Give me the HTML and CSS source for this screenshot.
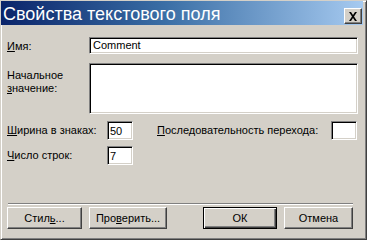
FILE: index.html
```html
<!DOCTYPE html>
<html lang="ru">
<head>
<meta charset="utf-8">
<title>Свойства текстового поля</title>
<link rel="stylesheet" href="styles.css">
</head>
<body>
<div class="window">
  <div class="titlebar">
    <span class="title">Свойства текстового поля</span>
    <span class="close">
      <svg width="10" height="9" viewBox="0 0 10 9"><path d="M1 0h2l2 3 2-3h2L6 4.5 9 9H7L5 6 3 9H1l3-4.5z" fill="#000"/></svg>
    </span>
  </div>
  <div class="content">
    <div class="row row-name">
      <label class="lbl"><u>И</u>мя:</label>
      <div class="field field-wide"><span class="val">Comment</span></div>
    </div>
    <div class="row row-area">
      <label class="lbl">Начальное<br><u>з</u>начение:</label>
      <div class="field field-wide field-area"></div>
    </div>
    <div class="row row-small">
      <label class="lbl lbl-short"><u>Ш</u>ирина в знаках:</label>
      <div class="field field-small"><span class="val">50</span></div>
      <label class="lbl lbl-tab"><u>П</u>оследовательность перехода:</label>
      <div class="field field-small"></div>
    </div>
    <div class="row row-small row-lines">
      <label class="lbl lbl-short"><u>Ч</u>исло строк:</label>
      <div class="field field-small"><span class="val">7</span></div>
    </div>
    <div class="spacer"></div>
    <div class="sep"></div>
    <div class="buttons">
      <button class="btn btn-style">Стил<u>ь</u>...</button>
      <button class="btn btn-check">Про<u>в</u>ерить...</button>
      <button class="btn btn-default">ОК</button>
      <button class="btn btn-cancel">Отмена</button>
    </div>
  </div>
</div>
</body>
</html>
```

FILE: styles.css
```css
* { box-sizing: border-box; }
html, body {
  margin: 0;
  padding: 0;
  background: #d4d0c8;
}
body {
  font-family: "Liberation Sans", Arial, sans-serif;
  font-size: 11px;
  color: #000;
}
.window {
  width: 367px;
  height: 240px;
  background: #d4d0c8;
  border-top: 1px solid #d4d0c8;
  border-left: 1px solid #d4d0c8;
  border-right: 1px solid #404040;
  border-bottom: 1px solid #404040;
  box-shadow: inset 1px 1px #ffffff, inset -1px -1px #808080;
  padding: 0 3px 2px 0;
  display: flex;
  flex-direction: column;
}
.titlebar {
  height: 24px;
  background: linear-gradient(to right, #0a246a 0%, #3a6ea5 45%, #a6caf0 100%);
  display: flex;
  align-items: flex-end;
  justify-content: space-between;
  padding: 0 1px 1px 2px;
}
.title {
  color: #fff;
  font-size: 18px;
  line-height: 20px;
  white-space: nowrap;
}
.close {
  width: 18px;
  height: 16px;
  background: #d4d0c8;
  border-top: 1px solid #fff;
  border-left: 1px solid #fff;
  border-right: 1px solid #404040;
  border-bottom: 1px solid #404040;
  box-shadow: inset -1px -1px #808080;
  display: flex;
  align-items: center;
  justify-content: center;
}
.close svg { display: block; }
.content {
  flex: 1;
  display: flex;
  flex-direction: column;
  padding: 12px 6px 8px 6px;
}
.row {
  display: flex;
  align-items: flex-start;
}
.lbl {
  width: 82px;
  flex: none;
  line-height: 13px;
}
.row-name .lbl { padding-top: 3px; }
.row-area { margin-top: 9px; }
.row-area .lbl { padding-top: 6px; }
.field {
  flex: none;
  background: #fff;
  border-top: 1px solid #808080;
  border-left: 1px solid #808080;
  border-right: 1px solid #fff;
  border-bottom: 1px solid #fff;
  box-shadow: inset 1px 1px #000, inset -1px -1px #d4d0c8;
  padding: 2px 3px;
  line-height: 13px;
  white-space: nowrap;
}
.field-wide { width: 269px; height: 17px; padding-top: 1px; }
.field-area { height: 51px; }
.row-small { margin-top: 7px; align-items: center; }
.row-lines { margin-top: 6px; }
.lbl-short { width: 100px; }
.field-small { width: 26px; height: 19px; padding: 3px 2px; }
.lbl-tab { flex: 1; width: auto; margin-left: 24px; }
.spacer { flex: 1; }
.sep {
  height: 2px;
  border-top: 1px solid #808080;
  border-bottom: 1px solid #fff;
  margin: 0 4px 2px 1px;
}
.buttons {
  display: flex;
  align-items: center;
}
.btn {
  flex: none;
  font-family: "Liberation Sans", Arial, sans-serif;
  font-size: 11px;
  color: #000;
  height: 22px;
  padding: 0;
  margin: 0;
  background: #d4d0c8;
  border-top: 1px solid #fff;
  border-left: 1px solid #fff;
  border-right: 1px solid #404040;
  border-bottom: 1px solid #404040;
  box-shadow: inset -1px -1px #808080;
  outline: none;
}
.btn-style { width: 75px; margin-right: 7px; }
.btn-check { width: 78px; margin-right: 36px; }
.btn-default {
  width: 74px;
  margin-right: 7px;
  border: 1px solid #000;
  box-shadow: inset 1px 1px #fff, inset -1px -1px #404040, inset -2px -2px #808080;
}
.btn-cancel { width: 69px; }
```
